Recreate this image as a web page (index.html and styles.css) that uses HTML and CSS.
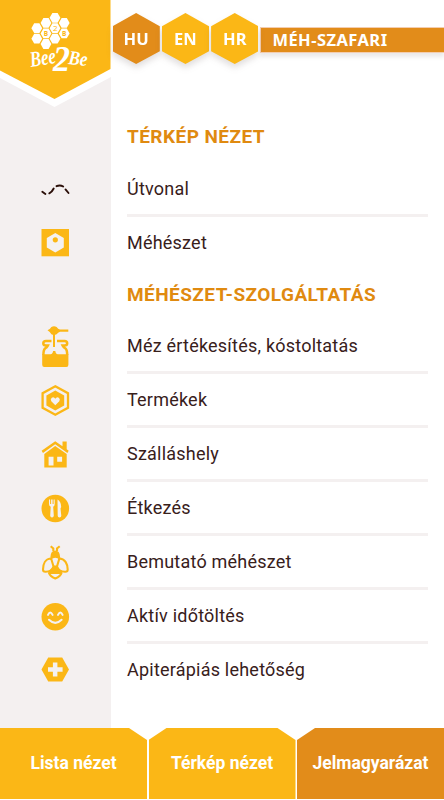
FILE: index.html
```html
<!DOCTYPE html>
<html lang="hu">
<head>
<meta charset="utf-8">
<title>Méh-szafari</title>
<link rel="stylesheet" href="styles.css">
</head>
<body>
<header class="header">
  <svg class="logo" width="111" height="112" viewBox="0 0 111 112">
    <path d="M0 0H111V77L54.5 107L0 78Z" fill="#fff"/>
    <path d="M0 0H110.5V69L54.5 99L0 70.5Z" fill="#fbb716"/>
    <defs><path id="cell" d="M-2.6-4.9H2.6L5.4 0L2.6 4.9H-2.6L-5.4 0Z"/></defs>
    <g fill="#fff">
      <use href="#cell" x="55" y="17.8"/>
      <use href="#cell" x="46" y="22.9"/><use href="#cell" x="64.2" y="22.9"/>
      <use href="#cell" x="36.8" y="28.2"/><use href="#cell" x="55" y="28.2"/>
      <use href="#cell" x="46" y="33.4"/><use href="#cell" x="64.2" y="33.4"/>
      <use href="#cell" x="36.8" y="38.7"/><use href="#cell" x="55" y="38.7"/>
      <use href="#cell" x="46" y="44"/>
    </g>
    <g class="logo-cells"><text x="46" y="36">B</text><text x="55.2" y="31.2" class="thin">2</text><text x="64.2" y="36">B</text></g>
    <g class="logo-script">
      <text x="31" y="67" font-size="22" textLength="26" lengthAdjust="spacingAndGlyphs" transform="rotate(-9 31 67)">Bee</text>
      <text x="53" y="71" font-size="36" textLength="17" lengthAdjust="spacingAndGlyphs">2</text>
      <text x="68" y="64" font-size="20" textLength="19" lengthAdjust="spacingAndGlyphs" transform="rotate(6 68 64)">Be</text>
    </g>
  </svg>
  <nav class="languages">
    <a class="language"><span class="hex active">HU</span></a>
    <a class="language"><span class="hex">EN</span></a>
    <a class="language"><span class="hex">HR</span></a>
  </nav>
  <div class="banner">MÉH-SZAFARI</div>
</header>
<main class="legend">
  <h2 class="title first">TÉRKÉP NÉZET</h2>
  <div class="row"><span class="icon">
    <svg width="30" height="42" viewBox="0 0 30 42"><path d="M2.3 23.7L5.4 26M9.3 25.3Q12 24 13.7 20.5M16.5 18.2Q20 16.5 23.2 18.5M25.5 21.4L28.5 25" fill="none" stroke="#2a0e08" stroke-width="1.9" stroke-linecap="round"/></svg>
  </span><span class="label">Útvonal</span></div>
  <div class="row last"><span class="icon">
    <svg width="30" height="42" viewBox="0 0 30 42"><path d="M1.5 7H29V34.3H1.5Z"/><path class="light" d="M15.3 11L23.8 16V25.6L15.3 30.5L6.8 25.6V16Z"/><circle cx="15.3" cy="17.8" r="2.6"/></svg>
  </span><span class="label">Méhészet</span></div>

  <h2 class="title">MÉHÉSZET-SZOLGÁLTATÁS</h2>
  <div class="row"><span class="icon">
    <svg width="30" height="42" viewBox="0 0 30 42"><path d="M7.5 5.3Q10 4 11.4 1.9Q14 .4 16.6 1.9Q18 4.1 20 4.5H28.3V6.7H20Q18 7.2 16.6 9.2Q14 10.7 11.4 9.2Q10 7 7.5 5.3Z"/><path d="M14 9V22" fill="none" stroke="#fbb716" stroke-width="2"/><path d="M11.5 16H6Q3.3 16 3.3 18.3T6 20.6H7.8Q6.8 22.5 5 23.5Q3.4 25 3.4 30M17 16H24.5Q27.2 16 27.2 18.3T24.5 20.6H22.7Q23.7 22.5 25.5 23.5Q27.2 25 27.2 30" fill="none" stroke="#fbb716" stroke-width="2.5"/><path d="M2.2 29.2H10.5Q12.8 29 13.1 26H15.3Q15.6 29 17.8 29.2H28.4V39.8Q28.4 42 26.4 42H4.2Q2.2 42 2.2 39.8Z"/></svg>
  </span><span class="label">Méz értékesítés, kóstoltatás</span></div>
  <div class="row"><span class="icon">
    <svg width="30" height="42" viewBox="0 0 30 42"><path d="M15.3 7.3L28 14.3V28.7L15.3 35.7L2.6 28.7V14.3Z" fill="none" stroke="#fbb716" stroke-width="2.3"/><path d="M15.3 11.5L24.2 16.5V26.5L15.3 31.5L6.4 26.5V16.5Z"/><path class="light" d="M15.3 26.2L11.3 22.2Q10 20 11.8 18.7Q14 17.5 15.3 19.8Q16.6 17.5 18.8 18.7Q20.6 20 19.3 22.2Z"/></svg>
  </span><span class="label">Termékek</span></div>
  <div class="row"><span class="icon">
    <svg width="30" height="42" viewBox="0 0 30 42"><path d="M15.2 8.2L22.5 13.3V8.5H26.7V16.2L28.7 17.8L27.4 20L15.2 11.2L3 20L1.6 17.8Z"/><path d="M4.3 21L15.2 13L26.7 21V34.5H4.3Z"/><path class="light" d="M8.6 23.7H13.5V32.5H8.6ZM17.2 23.7H22.1V28.7H17.2Z"/></svg>
  </span><span class="label">Szálláshely</span></div>
  <div class="row"><span class="icon">
    <svg width="30" height="42" viewBox="0 0 30 42"><circle cx="15.3" cy="21.5" r="13.8"/><path class="light" d="M9 12.5H10.1V17H11.1V12.5H12.6V17H13.6V12.5H14.7V17Q14.7 19 13.2 19.8L13.8 28.8Q13.6 30.5 12 30.5Q10.4 30.5 10.2 28.8L10.7 19.8Q9 19 9 17ZM17.5 12.5Q21.2 14.5 21.2 20L20.5 21.5L21.3 28.8Q21.3 30.5 19.5 30.5Q17.7 30.5 17.7 28.8Z"/></svg>
  </span><span class="label">Étkezés</span></div>
  <div class="row"><span class="icon">
    <svg width="30" height="42" viewBox="0 0 30 42"><g fill="none" stroke="#fbb716" stroke-width="2.1"><path d="M13.3 10V7.5L10.7 5.2M17 10V7.5L19.7 5.2M10.5 17.5C5.5 18 3 23 3 28.5Q3 30.7 5.3 30.8C9.5 31 12 29.5 13.5 25.5L11 17M20 17.5C25 18 27.7 23 27.7 28.5Q27.7 30.7 25.4 30.8C21 31 18.5 29.5 17 25.5L19.5 17M8.8 31.5Q10 35.5 15.3 37.5Q20.5 35.5 21.7 31.5"/></g><path d="M10.5 15.5Q10.8 9.5 15.3 9.5Q19.7 9.5 20 15.5L20.5 19Q17 16.8 15.3 16.8Q13.5 16.8 10 19ZM13.5 24.5H17Q18.5 28.5 22 30V33H8.5V30Q12 28.5 13.5 24.5Z"/></svg>
  </span><span class="label">Bemutató méhészet</span></div>
  <div class="row"><span class="icon">
    <svg width="30" height="42" viewBox="0 0 30 42"><circle cx="15.3" cy="21.7" r="13.8"/><path d="M8 19.9Q10.2 15.2 12.6 19.9M18 19.9Q20.4 15.2 22.6 19.9M9 24.8Q15.3 31 21.6 24.8" fill="none" stroke="#f4f1f1" stroke-width="2" stroke-linecap="round"/></svg>
  </span><span class="label">Aktív időtöltés</span></div>
  <div class="row last"><span class="icon">
    <svg width="30" height="42" viewBox="0 0 30 42"><path d="M8.2 8.5H22.2L29 20.5L22.2 32.5H8.2L1.5 20.5Z"/><path class="light" d="M12.9 13.5H17.4V18.3H22.6V22.7H17.4V27.5H12.9V22.7H8V18.3H12.9Z"/></svg>
  </span><span class="label">Apiterápiás lehetőség</span></div>
</main>
<nav class="tabs">
  <a class="tab cut-right">Lista nézet</a>
  <a class="tab cut-left cut-right">Térkép nézet</a>
  <a class="tab cut-left active">Jelmagyarázat</a>
</nav>
</body>
</html>
```
FILE: styles.css
```css
* { box-sizing: border-box; }
body {
  margin: 0;
  height: 800px;
  overflow: hidden;
  display: flex;
  flex-direction: column;
  font-family: Roboto, sans-serif;
  background: linear-gradient(90deg, #f4f0f0 111px, #fff 111px);
}
.header { height: 112px; display: flex; align-items: flex-start; }
.logo { flex: none; display: block; }
.logo-cells { font: 700 6.5px "Open Sans", sans-serif; fill: #fbb716; text-anchor: middle; }
.logo-cells .thin { font-weight: 400; font-size: 8px; }
.logo-script { font-family: "Liberation Serif", serif; font-style: italic; font-weight: 700; fill: #fff; }
.languages { display: flex; gap: 2px; padding: 13px 0 0 1.5px; }
.language { width: 47.3px; filter: drop-shadow(0 4px 3px rgba(90, 70, 70, .18)); }
.hex {
  display: block;
  height: 51px;
  text-align: center;
  color: #fff;
  font: 700 16.5px/51px "Noto Sans", sans-serif;
  background: #fbb716;
  clip-path: polygon(50% 0, 100% 26%, 100% 75%, 50% 100%, 0 75%, 0 26%);
}
.active { background: #e28c1a; }
.banner {
  flex: 1;
  margin: 26.5px 0 0 2px;
  height: 26px;
  padding-left: 11px;
  color: #fff;
  font: 700 16.5px/24px "Noto Sans", sans-serif;
  letter-spacing: .45px;
  white-space: nowrap;
  background: #e28c1a;
  border: 1px solid #f3cdb0;
  border-right: 0;
  box-shadow: 0 4px 4px rgba(90, 70, 70, .12);
}
.legend { flex: 1; }
.title {
  margin: 0 0 0 127px;
  height: 49px;
  line-height: 48px;
  font-size: 19px;
  font-weight: 700;
  letter-spacing: .45px;
  color: #e08a10;
  white-space: nowrap;
}
.title.first { height: 51px; line-height: 50px; }
.row { height: 54px; display: flex; }
.icon { width: 111px; padding: 5px 0 0 40px; flex: none; }
.icon svg { display: block; fill: #fbb716; }
.icon .light { fill: #f4f1f1; }
.label {
  flex: 1;
  margin: 0 16px;
  line-height: 51px;
  font-size: 18px;
  letter-spacing: .22px;
  color: #38201b;
  border-bottom: 3px solid #f4f0f0;
  white-space: nowrap;
}
.last .label { border-bottom: 0; }
.tabs { height: 72px; display: flex; gap: 1.5px; padding-bottom: 1px; background: #fff; }
.tab {
  flex: 1;
  line-height: 70px;
  text-align: center;
  color: #fff;
  font-size: 17.5px;
  font-weight: 700;
  background: #fbb716;
  clip-path: polygon(0 0, calc(100% - 18px) 0, 100% 12px, 100% 100%, 0 100%);
}
.tab.cut-left { clip-path: polygon(18px 0, 100% 0, 100% 100%, 0 100%, 0 12px); }
.tab.cut-left.cut-right { clip-path: polygon(18px 0, calc(100% - 18px) 0, 100% 12px, 100% 100%, 0 100%, 0 12px); }
.tab.active { background: #e28c1a; }
```
